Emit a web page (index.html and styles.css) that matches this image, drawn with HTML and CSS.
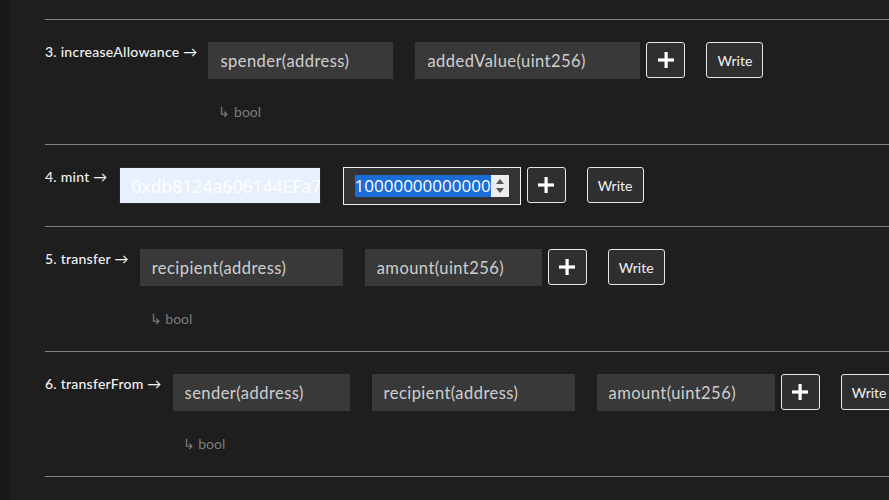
FILE: index.html
```html
<!DOCTYPE html>
<html lang="en">
<head>
<meta charset="utf-8">
<title>Contract functions</title>
<link rel="stylesheet" href="styles.css">
</head>
<body>
<div class="page">
  <div class="rail"></div>
  <main class="content">
    <section class="fn">
      <div class="fn-name">3. increaseAllowance →</div>
      <div class="fn-body">
        <div class="fn-inputs">
          <input class="field w185" type="text" placeholder="spender(address)">
          <input class="field w225" type="text" placeholder="addedValue(uint256)">
          <div class="actions">
            <button class="btn-plus" type="button" aria-label="add"><svg width="16" height="16" viewBox="0 0 16 16"><rect x="6.5" y="0" width="3.2" height="16" fill="#fff"/><rect x="0" y="6.4" width="16" height="3.2" fill="#fff"/></svg></button>
            <button class="btn-write" type="button">Write</button>
          </div>
        </div>
        <div class="fn-ret">↳ bool</div>
      </div>
    </section>

    <section class="fn">
      <div class="fn-name">4. mint →</div>
      <div class="fn-body">
        <div class="fn-inputs">
          <div class="field w202 autofill"><span class="val-light">0xdb8124a606144EFa7</span></div>
          <div class="field w178 focused">
            <span class="val-sel">10000000000000</span>
            <span class="spin"><svg width="12" height="20" viewBox="0 0 12 20"><path d="M6 3 L10 8 H2 Z" fill="#555"/><path d="M6 17 L10 12 H2 Z" fill="#555"/></svg></span>
          </div>
          <div class="actions">
            <button class="btn-plus" type="button" aria-label="add"><svg width="16" height="16" viewBox="0 0 16 16"><rect x="6.5" y="0" width="3.2" height="16" fill="#fff"/><rect x="0" y="6.4" width="16" height="3.2" fill="#fff"/></svg></button>
            <button class="btn-write" type="button">Write</button>
          </div>
        </div>
      </div>
    </section>

    <section class="fn">
      <div class="fn-name">5. transfer →</div>
      <div class="fn-body">
        <div class="fn-inputs">
          <input class="field w203" type="text" placeholder="recipient(address)">
          <input class="field w177" type="text" placeholder="amount(uint256)">
          <div class="actions">
            <button class="btn-plus" type="button" aria-label="add"><svg width="16" height="16" viewBox="0 0 16 16"><rect x="6.5" y="0" width="3.2" height="16" fill="#fff"/><rect x="0" y="6.4" width="16" height="3.2" fill="#fff"/></svg></button>
            <button class="btn-write" type="button">Write</button>
          </div>
        </div>
        <div class="fn-ret">↳ bool</div>
      </div>
    </section>

    <section class="fn">
      <div class="fn-name">6. transferFrom →</div>
      <div class="fn-body">
        <div class="fn-inputs">
          <input class="field w177" type="text" placeholder="sender(address)">
          <input class="field w203" type="text" placeholder="recipient(address)">
          <input class="field w178" type="text" placeholder="amount(uint256)">
          <div class="actions">
            <button class="btn-plus" type="button" aria-label="add"><svg width="16" height="16" viewBox="0 0 16 16"><rect x="6.5" y="0" width="3.2" height="16" fill="#fff"/><rect x="0" y="6.4" width="16" height="3.2" fill="#fff"/></svg></button>
            <button class="btn-write" type="button">Write</button>
          </div>
        </div>
        <div class="fn-ret">↳ bool</div>
      </div>
    </section>
    <div class="tail"></div>
  </main>
</div>
</body>
</html>
```

FILE: styles.css
```css
html, body {
  margin: 0;
  padding: 0;
  background: #1e1e1e;
  overflow: hidden;
  height: 100%;
}
.page {
  display: flex;
  min-height: 500px;
  font-family: Lato, "Noto Sans", sans-serif;
}
.rail {
  width: 9px;
  flex-shrink: 0;
  background: #181818;
}
.content {
  flex: 1;
  padding: 19px 0 0 36px;
  min-width: 0;
}
.fn {
  border-top: 1px solid #7f7f7f;
  padding: 22px 0 22px;
  display: flex;
  align-items: flex-start;
  white-space: nowrap;
}
.tail {
  border-top: 1px solid #7f7f7f;
  height: 30px;
}
.fn-name {
  color: #f2f2f2;
  font-size: 14px;
  letter-spacing: 0.25px;
  font-weight: 500;
  line-height: 18px;
  padding-top: 1px;
  margin-right: 11px;
  flex-shrink: 0;
}
.fn-body {
  display: flex;
  flex-direction: column;
  flex-shrink: 0;
}
.fn-inputs {
  display: flex;
  align-items: flex-start;
  gap: 22px;
}
.field {
  box-sizing: border-box;
  height: 37px;
  border: none;
  outline: none;
  background: #393939;
  color: #d0d0d0;
  font-family: Lato, "Noto Sans", sans-serif;
  font-size: 16.5px;
  letter-spacing: 0.45px;
  padding: 0 0 0 12px;
  flex-shrink: 0;
  margin: 0;
}
.field::placeholder {
  color: #cfcfcf;
  opacity: 1;
}
.w177 { width: 177px; }
.w178 { width: 178px; }
.w185 { width: 185px; }
.w202 { width: 202px; }
.w203 { width: 203px; }
.w225 { width: 225px; }

.autofill {
  background: #e8f0fe;
  border: 1px solid #2a2a2a;
  display: flex;
  align-items: center;
  overflow: hidden;
  padding-left: 12px;
  letter-spacing: 0;
}
.val-light {
  color: #ffffff;
  font-family: "Open Sans", "Noto Sans", sans-serif;
  font-size: 17.6px;
}
.focused {
  background: #343434;
  border: 1px solid #f0f0f0;
  display: flex;
  align-items: center;
  padding-left: 11px;
  height: 38px;
  margin-bottom: -1px;
  overflow: hidden;
  letter-spacing: 0;
}
.val-sel {
  background: #1a6cd6;
  color: #ffffff;
  font-family: "Open Sans", "Noto Sans", sans-serif;
  font-size: 17px;
  line-height: 22px;
  width: 136px;
  overflow: hidden;
  flex-shrink: 0;
}
.spin {
  width: 18px;
  height: 22px;
  background: #ececec;
  display: flex;
  align-items: center;
  justify-content: center;
  flex-shrink: 0;
}
.actions {
  display: flex;
  align-items: flex-start;
  gap: 21px;
  margin-left: -16px;
}
.btn-plus, .btn-write {
  box-sizing: border-box;
  height: 36px;
  border: 1px solid #e6e6e6;
  border-radius: 3px;
  background: #2f2f2f;
  color: #f2f2f2;
  padding: 0;
  margin: 0;
  display: flex;
  align-items: center;
  justify-content: center;
  flex-shrink: 0;
  cursor: pointer;
}
.btn-plus { width: 39px; }
.btn-write {
  width: 57px;
  font-family: Lato, "Noto Sans", sans-serif;
  font-size: 14px;
}
.fn-ret {
  margin-top: 22px;
  padding-left: 10px;
  color: #7c7c7c;
  font-size: 14px;
  line-height: 21px;
}
```
